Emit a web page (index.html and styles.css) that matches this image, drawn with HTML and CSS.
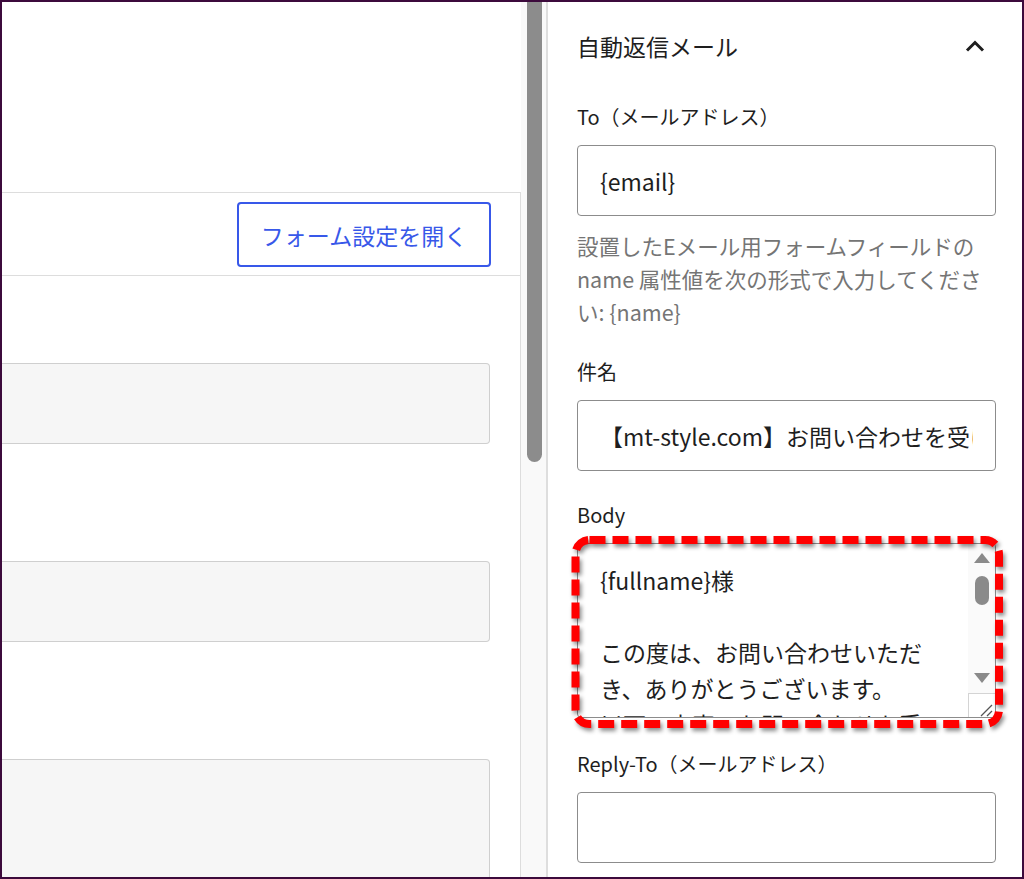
FILE: index.html
```html
<!DOCTYPE html>
<html lang="ja">
<head>
<meta charset="utf-8">
<title>自動返信メール</title>
<link rel="stylesheet" href="styles.css">
</head>
<body>
<div class="frame">
  <div class="left">
    <div class="card">
      <div class="bar"><button class="btn" type="button">フォーム設定を開く</button></div>
      <div class="gfields">
        <div class="gbox"></div>
        <div class="gbox"></div>
        <div class="gbox gbox-tall"></div>
      </div>
    </div>
  </div>
  <div class="vscroll"><div class="vthumb"></div></div>
  <aside class="panel">
    <div class="panel-head">
      <h2 class="panel-title">自動返信メール</h2>
      <svg class="chev" width="20" height="12" viewBox="0 0 20 12"><path d="M2 10.5 L10 2.5 L18 10.5" fill="none" stroke="#1e1e1e" stroke-width="3"/></svg>
    </div>
    <div class="rfields">
      <div class="field">
        <label class="lbl">To（メールアドレス）</label>
        <input class="inp" type="text" value="{email}">
        <p class="help">設置したEメール用フォームフィールドの name 属性値を次の形式で入力してください: {name}</p>
      </div>
      <div class="field">
        <label class="lbl">件名</label>
        <input class="inp" type="text" value="【mt-style.com】お問い合わせを受け付けました">
      </div>
      <div class="field field-ta">
        <label class="lbl">Body</label>
        <div class="ta">
          <div class="ta-text">{fullname}様<br><br>この度は、お問い合わせいただき、ありがとうございます。<br>以下の内容でお問い合わせを受け付けました。</div>
          <div class="ta-scroll">
            <div class="arrow-up"></div>
            <div class="ta-thumb"></div>
            <div class="arrow-down"></div>
            <div class="resizer">
              <svg width="26" height="24" viewBox="0 0 26 24"><path d="M12 22 L23 11 M18 22 L23 17" stroke="#555" stroke-width="1.3" fill="none"/></svg>
            </div>
          </div>
          <svg class="dash" width="419" height="175" viewBox="0 0 419 175"><rect x="-1.5" y="-3" width="423.5" height="184" rx="14" ry="14" fill="none" stroke="#ff0000" stroke-width="8" stroke-dasharray="16 7"/></svg>
        </div>
      </div>
      <div class="field">
        <label class="lbl">Reply-To（メールアドレス）</label>
        <input class="inp" type="text" value="">
      </div>
    </div>
  </aside>
</div>
</body>
</html>
```
FILE: styles.css
```css
body {
  margin: 0;
  font-family: "Noto Sans CJK JP", "Open Sans", sans-serif;
  color: #1e1e1e;
  background: #fff;
}

.frame {
  width: 1024px;
  height: 879px;
  box-sizing: border-box;
  border: 2px solid #3c0a3c;
  display: flex;
  overflow: hidden;
  background: #fff;
}

/* left editor area */
.left {
  width: 519px;
  flex: none;
  display: flex;
  flex-direction: column;
}

.card {
  margin-top: 190px;
  flex: 1;
  border-top: 1px solid #dddddd;
  border-right: 1px solid #dddddd;
  display: flex;
  flex-direction: column;
}

.bar {
  height: 82px;
  border-bottom: 1px solid #dddddd;
  display: flex;
  justify-content: flex-end;
  align-items: center;
  padding-right: 29px;
}

.btn {
  width: 254px;
  height: 65px;
  box-sizing: border-box;
  border: 2px solid #3858e9;
  border-radius: 4px;
  background: #fff;
  color: #3858e9;
  font-family: "Noto Sans CJK JP", sans-serif;
  font-size: 23px;
  padding: 0;
  margin-top: 1px;
}

.gfields {
  padding: 87px 30px 0 0;
  display: flex;
  flex-direction: column;
  gap: 117px;
}

.gbox {
  height: 81px;
  box-sizing: border-box;
  background: #f6f6f6;
  border: 1px solid #cfcfcf;
  border-left: none;
  border-radius: 0 4px 4px 0;
}

.gbox-tall {
  height: 160px;
}

/* main scrollbar */
.vscroll {
  width: 25px;
  flex: none;
  background: #f9f9f9;
  padding-left: 6px;
  box-sizing: border-box;
}

.vthumb {
  width: 15px;
  height: 460px;
  background: #8c8c8c;
  border-radius: 0 0 8px 8px;
}

/* right settings panel */
.panel {
  flex: 1;
  border-left: 2px solid #dedede;
  padding: 28px 26px 0 29px;
  min-width: 0;
}

.panel-head {
  height: 32px;
  display: flex;
  align-items: center;
  justify-content: space-between;
}

.panel-title {
  margin: 0;
  font-size: 23px;
  font-weight: 400;
  line-height: 30px;
}

.chev {
  margin-right: 11px;
  display: block;
}

.rfields {
  margin-top: 41px;
  display: flex;
  flex-direction: column;
  gap: 30px;
}

.field {
  display: flex;
  flex-direction: column;
}

.field-ta {
  margin-bottom: 2px;
}

.lbl {
  display: block;
  font-size: 20px;
  line-height: 28px;
  margin-bottom: 14px;
}

.inp {
  width: 100%;
  height: 71px;
  box-sizing: border-box;
  border: 1px solid #8c8c8c;
  border-radius: 4px;
  padding: 0 22px;
  font-family: "Noto Sans CJK JP", "Open Sans", sans-serif;
  font-size: 23px;
  color: #1e1e1e;
  background: #fff;
  margin: 0;
}

.help {
  margin: 13px 0 0;
  font-size: 21.5px;
  line-height: 33px;
  color: #757575;
}

/* textarea */
.ta {
  position: relative;
  height: 175px;
  box-sizing: border-box;
  border: 1px solid #8c8c8c;
  border-radius: 4px;
  display: flex;
}

.ta-text {
  flex: 1;
  min-width: 0;
  padding: 18px 28px 0 22px;
  font-size: 23px;
  line-height: 36px;
  overflow: hidden;
}

.ta-scroll {
  width: 27px;
  flex: none;
  background: #fafafa;
  display: flex;
  flex-direction: column;
  align-items: center;
  padding-top: 9px;
  box-sizing: border-box;
}

.arrow-up {
  width: 0;
  height: 0;
  border-left: 8.5px solid transparent;
  border-right: 8.5px solid transparent;
  border-bottom: 10px solid #8a8a8a;
}

.ta-thumb {
  width: 14px;
  height: 29px;
  margin-top: 13px;
  background: #8a8a8a;
  border-radius: 7px;
}

.arrow-down {
  width: 0;
  height: 0;
  margin-top: 68px;
  border-left: 8.5px solid transparent;
  border-right: 8.5px solid transparent;
  border-top: 10px solid #8a8a8a;
}

.resizer {
  margin-top: 10px;
  width: 27px;
  height: 24px;
  box-sizing: border-box;
  border-top: 1px solid #d4d4d4;
  border-left: 1px solid #d4d4d4;
  background: #fff;
  align-self: stretch;
}

.resizer svg {
  display: block;
}

.dash {
  position: absolute;
  left: -1px;
  top: -1px;
  overflow: visible;
  pointer-events: none;
  filter: drop-shadow(2px 3px 2px rgba(0, 0, 0, 0.45));
}
```
